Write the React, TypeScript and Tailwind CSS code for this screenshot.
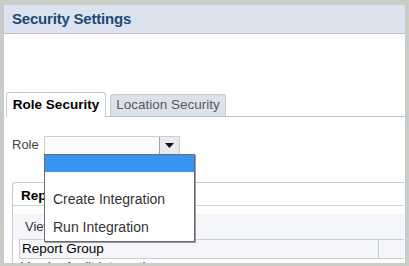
import React from "react";

export default function App() {
  return (
    <div
      className="relative w-[409px] h-[266px] overflow-hidden bg-[#c9cdc6] pt-[4px] px-[3px]"
      style={{ fontFamily: '"Liberation Sans", Arial, sans-serif' }}
    >
      <div className="h-[259px] overflow-hidden bg-white border-l border-t border-r border-[#c3cbd6] flex flex-col">
        {/* header */}
        <div className="h-[29px] shrink-0 bg-[#dde3ee] border-b border-[#b7c2d2] flex items-center pl-[8px]">
          <span className="text-[15px] font-bold text-[#1d4a76] tracking-[-0.2px]">Security Settings</span>
        </div>
        {/* spacer */}
        <div className="h-[58px] shrink-0" />
        {/* tabs */}
        <div className="flex items-end h-[25px] shrink-0 pl-[2px]">
          <div className="h-[25px] w-[100px] border border-b-0 border-[#c3cbd6] rounded-t-[3px] bg-white flex items-center justify-center text-[13.5px] font-bold text-black">
            Role Security
          </div>
          <div className="flex-1 h-[22px] flex items-end border-b border-[#b7c2d2]">
            <div className="ml-[4px] h-[22px] w-[116px] border border-b-0 border-[#c3cbd6] rounded-t-[3px] bg-[#dde2ea] flex items-center justify-center text-[13.5px] text-[#555a60]">
              Location Security
            </div>
          </div>
        </div>
        {/* role row */}
        <div className="h-[20px] mt-[18px] shrink-0 flex items-center pl-[8px]">
          <span className="text-[13px] text-[#444] w-[32px]">Role</span>
          <div className="w-[136px] h-[19px] border border-[#c8ccd4] bg-[#f9fbfd] flex justify-end">
            <div className="w-[20px] h-[18px] border-l border-[#a0a4aa] bg-[#e8ebee] flex items-center justify-center">
              <svg width="9" height="6" viewBox="0 0 9 6">
                <polygon points="0,0 9,0 4.5,5" fill="#111" />
              </svg>
            </div>
          </div>
        </div>
        {/* inner panel */}
        <div className="mt-[27px] ml-[8px] mr-[1px] flex-1 border-l border-t border-[#c3cbd6] rounded-tl-[4px] flex flex-col">
          <div className="h-[23px] shrink-0 flex border-b border-[#c8d3e3]">
            <div className="pl-[8px] pt-[3px] text-[13.5px] font-bold text-black">Report Group</div>
          </div>
          <div className="h-[8px] shrink-0" />
          <div className="h-[25px] shrink-0 bg-[#f4f6fa] pl-[12px] flex items-center">
            <span className="text-[13px] text-[#333]">View</span>
          </div>
          <div className="ml-[6px] h-[20px] shrink-0 border-t border-b border-l border-[#c9cdd4] bg-[#f4f6fa] flex">
            <div className="w-[359px] border-r border-[#c9cdd4] pl-[2px] text-[13.5px] text-black leading-[18px]">
              Report Group
            </div>
            <div className="flex-1" />
          </div>
          <div className="ml-[8px] text-[13px] text-[#333] leading-[16px]">Vendor Audit Integration</div>
        </div>
      </div>

      {/* dropdown */}
      <div className="absolute left-[44px] top-[154px] w-[151px] h-[88px] bg-white border border-[#6a6a6a] shadow-[1px_1px_0_#9a9a9a] flex flex-col">
        <div className="h-[17px] bg-[#3894f2] shrink-0" />
        <div className="h-[28px] mt-[13px] flex items-center pl-[8px] text-[14px] text-[#333]">Create Integration</div>
        <div className="h-[28px] flex items-center pl-[8px] text-[14px] text-[#333]">Run Integration</div>
      </div>
    </div>
  );
}
